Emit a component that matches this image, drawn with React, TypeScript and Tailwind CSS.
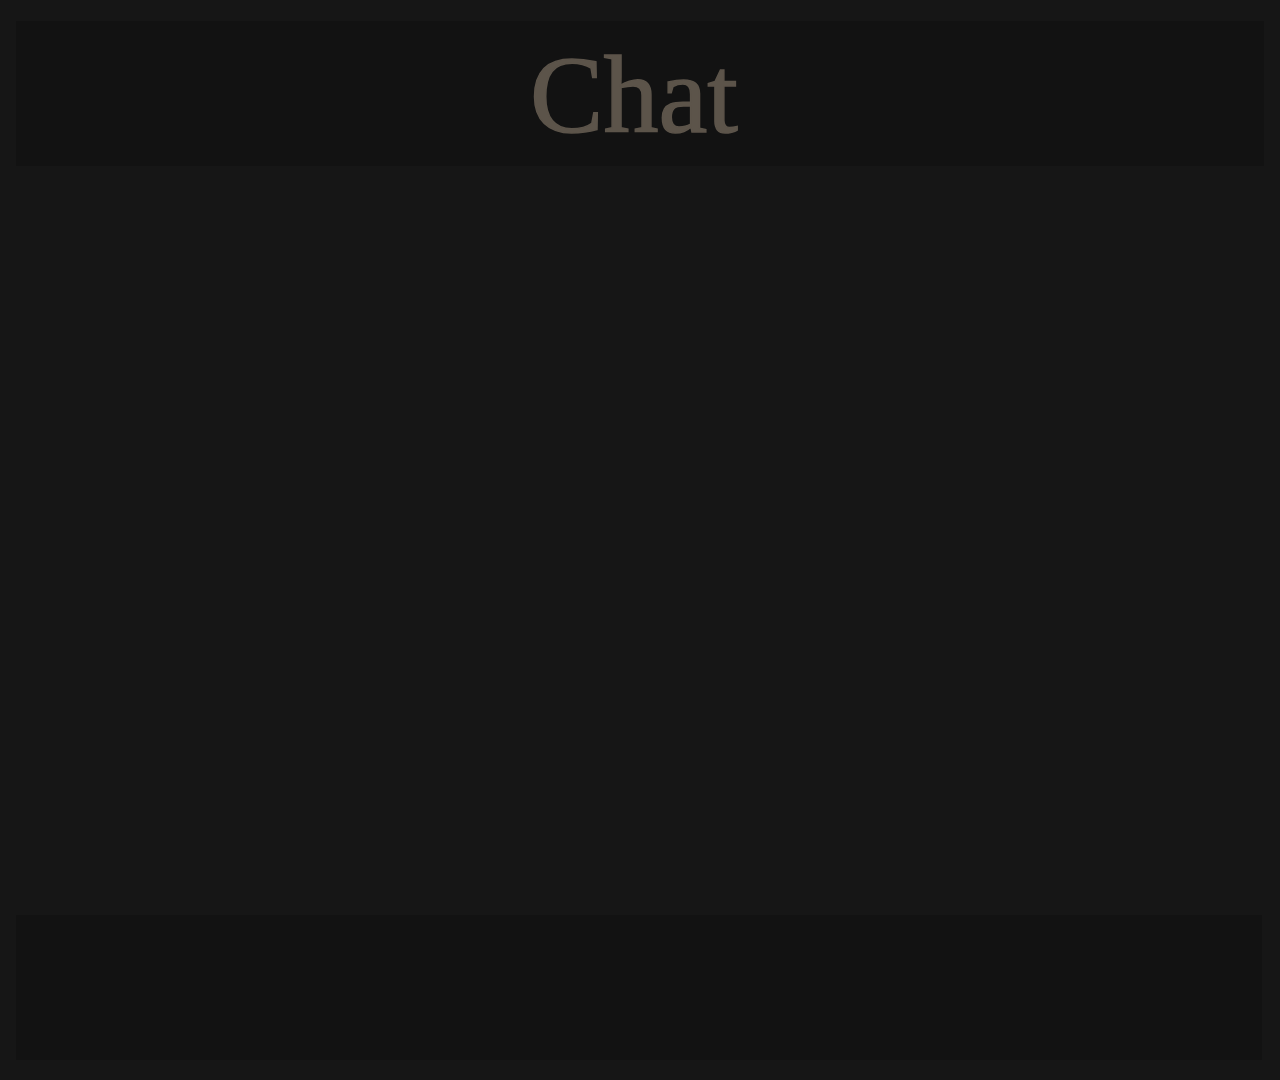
import React from "react";

const App: React.FC = () => {
    return (
        <div className="h-[1080px] w-full bg-[#161616] flex flex-col px-4 pt-[21px] pb-[20px]">
            <header className="h-[145px] shrink-0 bg-[#121212] flex items-center justify-center pt-[2px] pr-3">
                <h1
                    className="text-[110px] leading-none text-[#5c544a] [-webkit-text-stroke:1.5px_#5c544a]"
                    style={{ fontFamily: '"Liberation Serif", serif' }}
                >
                    Chat
                </h1>
            </header>
            <main className="flex-1"></main>
            <footer className="h-[145px] shrink-0 bg-[#121212] mr-[2px]"></footer>
        </div>
    );
};

export default App;
